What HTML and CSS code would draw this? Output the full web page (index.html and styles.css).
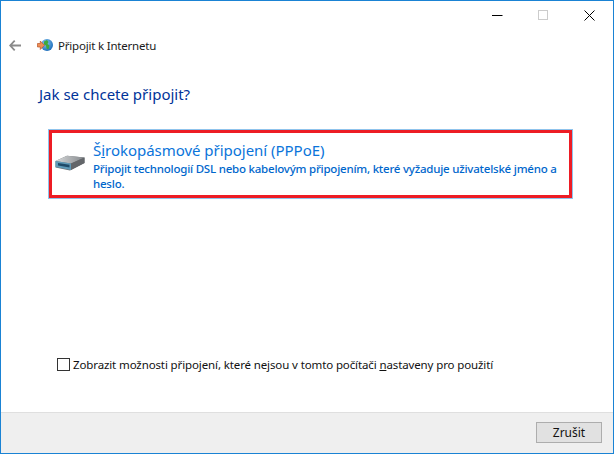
FILE: index.html
```html
<!DOCTYPE html>
<html lang="cs">
<head>
<meta charset="utf-8">
<title>Připojit k Internetu</title>
<link rel="stylesheet" href="styles.css">
</head>
<body>
<div class="window">
  <div class="titlebar">
    <svg class="cap" width="11" height="11" viewBox="0 0 11 11"><path d="M0 5.5h10.5" stroke="#000" stroke-width="1"/></svg>
    <svg class="cap" width="11" height="11" viewBox="0 0 11 11"><rect x="0.5" y="0.5" width="9" height="9" fill="none" stroke="#ccc"/></svg>
    <svg class="cap" width="11" height="11" viewBox="0 0 11 11"><path d="M0.5 0.5l10 10M10.5 0.5l-10 10" stroke="#000" stroke-width="1"/></svg>
  </div>
  <div class="nav">
    <svg class="back" width="12" height="11" viewBox="0 0 12 11"><path d="M5.7 .7L1.2 5.5l4.5 4.8M1.5 5.5H12" fill="none" stroke="#8a8a8a" stroke-width="1.8"/></svg>
    <svg class="appicon" width="16" height="15" viewBox="0 0 16 15">
      <defs><radialGradient id="g" cx="0.4" cy="0.35" r="0.7"><stop offset="0" stop-color="#8cccf4"/><stop offset="1" stop-color="#1668b8"/></radialGradient></defs>
      <circle cx="10" cy="7" r="6" fill="url(#g)"/>
      <path d="M7 3.5l3-1.5 1.5 2-1 2 2 1.5-1 4-2-1-.5-3-2-1z" fill="#3fa83c"/>
      <path d="M0.5 5.5h2.8V3L7.5 7.3 3.3 11.5V9H0.5z" fill="#ee8f55" stroke="#b8532a" stroke-width="0.7"/>
    </svg>
    <span class="navtitle">Připojit k Internetu</span>
  </div>
  <main class="content">
    <h1 class="question">Jak se chcete připojit?</h1>
    <div class="option">
      <svg class="drive" width="30" height="16" viewBox="0 0 30 16">
        <defs><linearGradient id="d" x1="0" y1="0" x2="1" y2="0"><stop offset="0" stop-color="#d8dadb"/><stop offset="1" stop-color="#84888c"/></linearGradient></defs>
        <path d="M0.5 6L12 0.8 29.5 2.5V8L15 15.5 0.5 12.5z" fill="#6d7074"/>
        <path d="M0.5 6L12 0.8 29.5 2.5 16 8.5z" fill="url(#d)"/>
        <path d="M0.5 6L16 8.5V15L0.5 12z" fill="#5f9ab8"/>
        <path d="M3 8L14.5 9.8v2.6L3 10.4z" fill="#1f4a68"/>
        <path d="M16 8.5L29.5 2.5V8L16 15z" fill="#63666a"/>
      </svg>
      <div class="optiontext">
        <div class="optiontitle">Š<u>i</u>rokopásmové připojení (PPPoE)</div>
        <div class="optiondesc">Připojit technologií DSL nebo kabelovým připojením, které vyžaduje uživatelské jméno a heslo.</div>
      </div>
    </div>
    <label class="check"><span class="box"></span><span>Zobrazit možnosti připojení, které nejsou v tomto počítači <u>n</u>astaveny pro použití</span></label>
  </main>
  <footer class="footer"><button class="btn">Zrušit</button></footer>
</div>
</body>
</html>
```
FILE: styles.css
```css
* { box-sizing: border-box; }
html, body { margin: 0; padding: 0; }
body { width: 614px; height: 454px; overflow: hidden; font-family: "Noto Sans", "Open Sans", sans-serif; }
.window { width: 614px; height: 454px; background: #fff; border: 1px solid #1a83d4; display: flex; flex-direction: column; }
.titlebar { height: 29px; display: flex; justify-content: flex-end; align-items: flex-start; gap: 35px; padding: 9px 18px 0 0; flex: none; }
.cap { display: block; }
.nav { height: 30px; display: flex; align-items: center; padding-left: 8px; flex: none; }
.back { margin-right: 16px; }
.appicon { margin-right: 5px; }
.navtitle { font-size: 11.5px; letter-spacing: -0.2px; color: #1a1a1a; }
.content { flex: 1; display: flex; flex-direction: column; padding-left: 38px; min-height: 0; }
.question { font-weight: 400; font-size: 15px; line-height: 20px; color: #003399; margin: 24px 0 26px; }
.option { width: 523px; height: 68px; margin-left: 10px; background: #fff; border: 3px solid #ed1c24; outline: 1px solid #8fc3ec; display: flex; padding: 7px 6px 0 3px; }
.drive { margin: 15px 8px 0 0; flex: none; }
.optiontitle { font-size: 15px; line-height: 21px; letter-spacing: -0.03px; color: #0a74da; }
.optiondesc { font-size: 11.5px; line-height: 15px; letter-spacing: -0.22px; color: #0066cc; font-weight: 500; }
.check { display: flex; align-items: center; font-size: 11.5px; letter-spacing: -0.12px; color: #111; margin: 159px 0 0 18px; gap: 3px; }
.box { width: 13px; height: 13px; border: 1px solid #333; background: #fff; flex: none; }
.footer { height: 41px; flex: none; background: #efefef; border-top: 1px solid #dfdfdf; display: flex; justify-content: flex-end; align-items: flex-start; padding: 9px 11px 0 0; }
.btn { width: 66px; height: 21px; padding: 0; background: #e1e1e1; border: 1px solid #adadad; font: inherit; font-size: 12px; color: #111; }
```
